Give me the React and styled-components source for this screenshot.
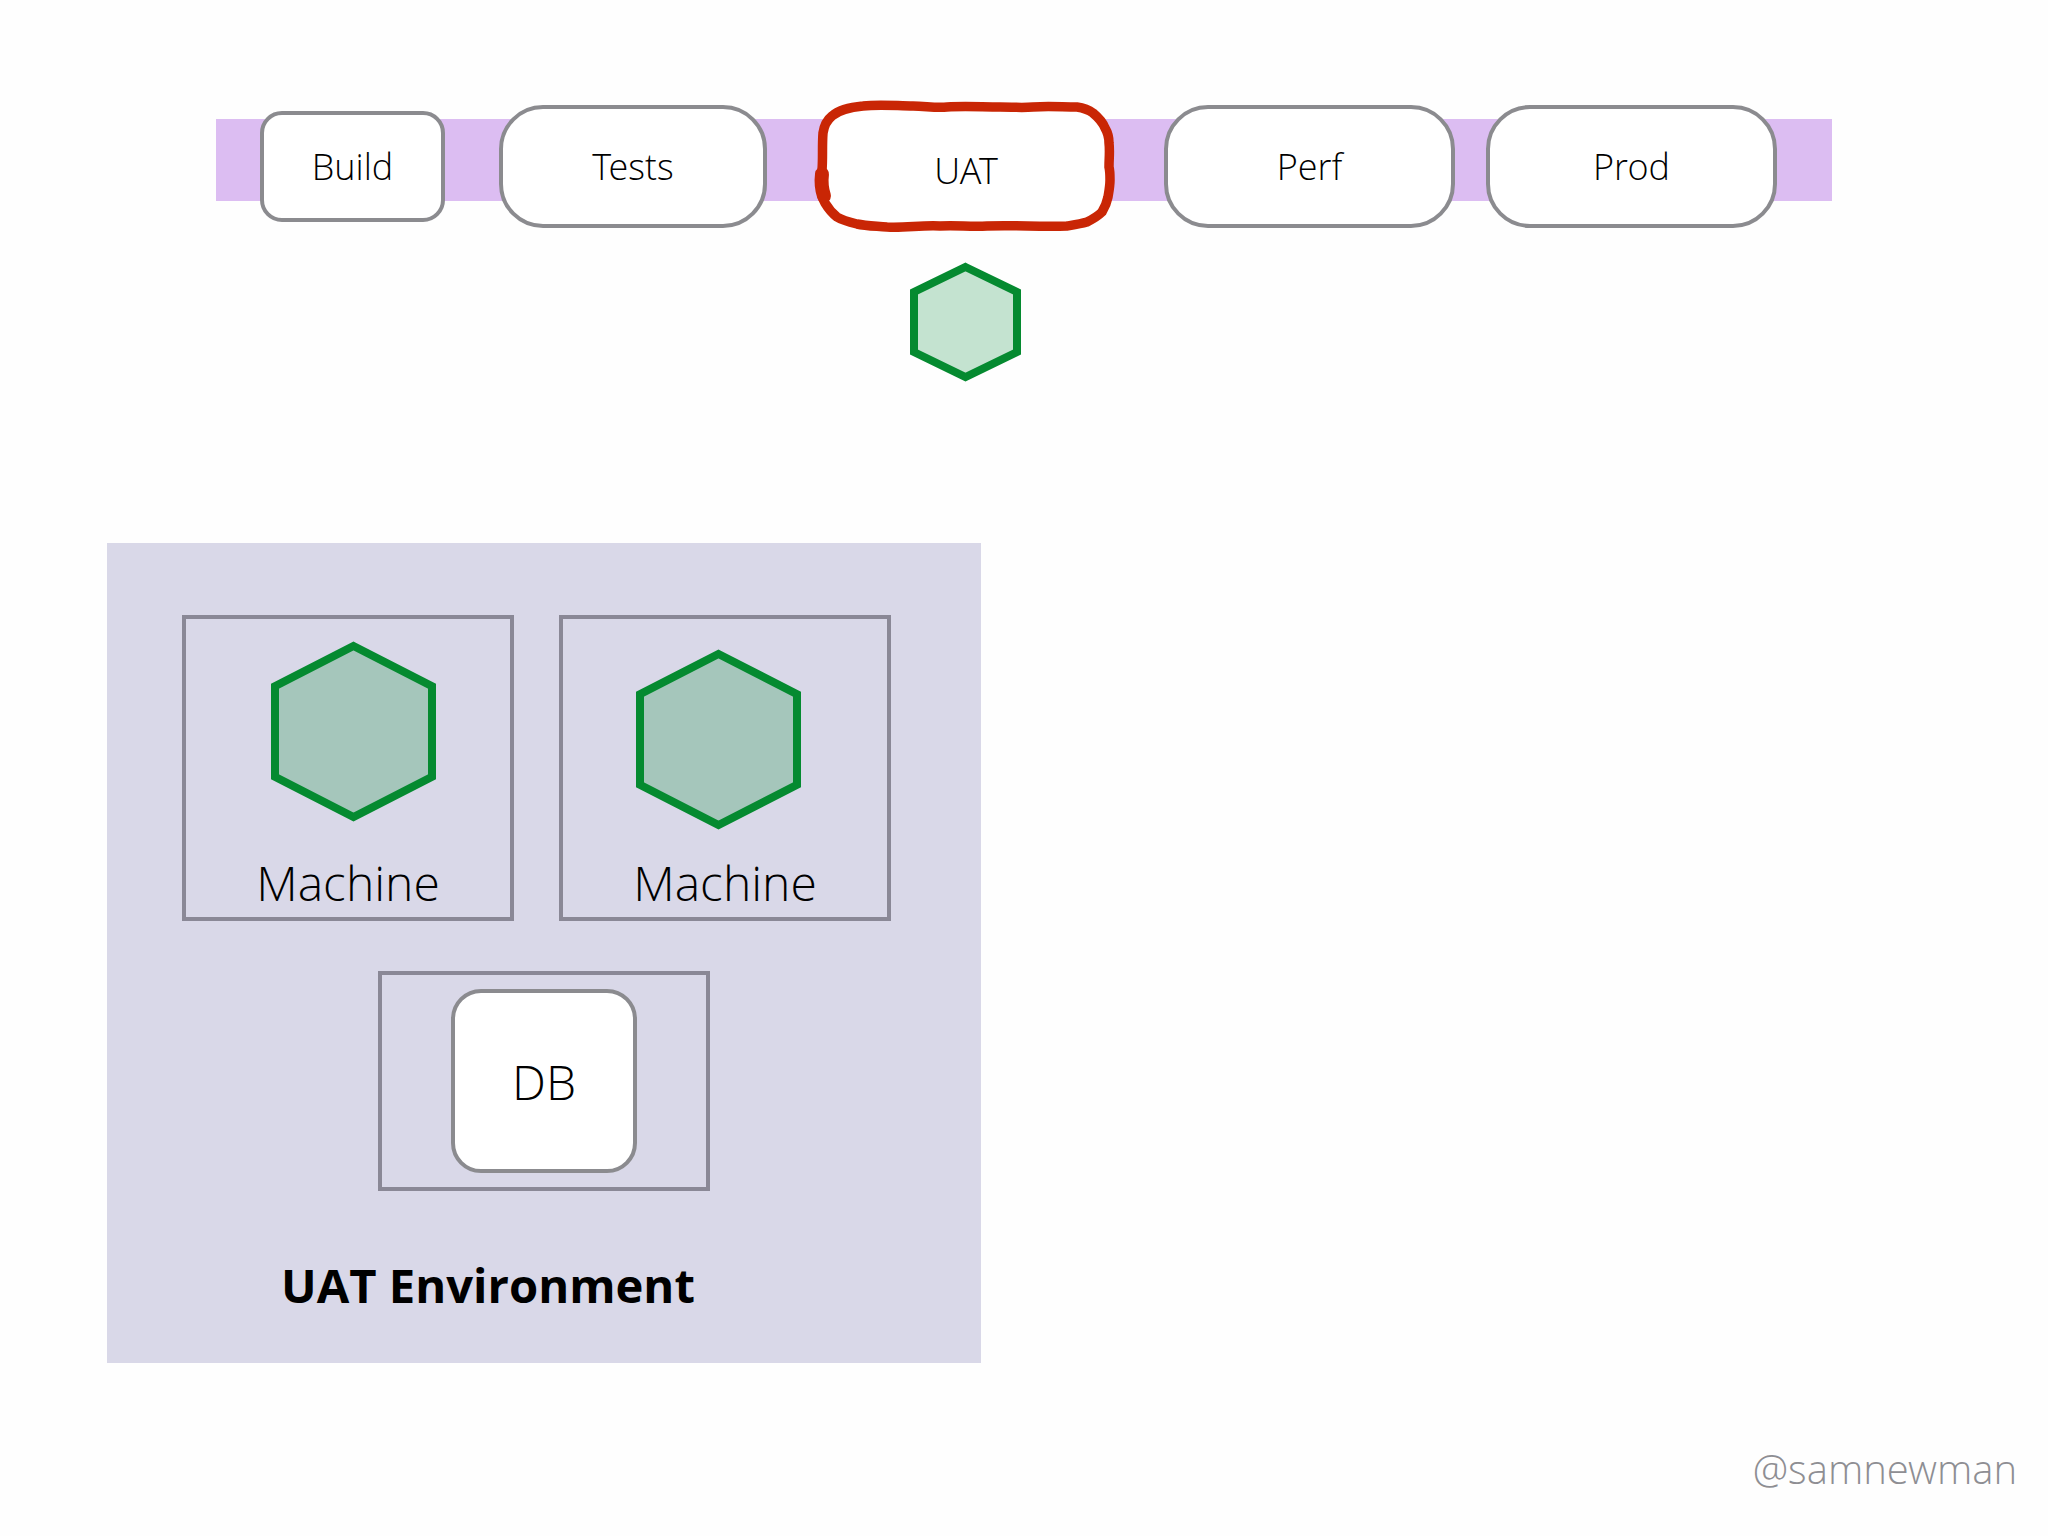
import React from 'react'
import styled, { createGlobalStyle } from 'styled-components'

const GlobalStyle = createGlobalStyle`
  html, body {
    margin: 0;
    padding: 0;
    background: #fefefe;
  }
  * {
    box-sizing: border-box;
  }
`

const stages = [
  { name: 'Build', width: 185, height: 111, radius: 22, gap: 54 },
  { name: 'Tests', width: 268, height: 123, radius: 44, gap: 53 },
  { name: 'UAT', width: 290, height: 123, radius: 44, gap: 54, active: true },
  { name: 'Perf', width: 291, height: 123, radius: 44, gap: 31 },
  { name: 'Prod', width: 291, height: 123, radius: 44, gap: 0 },
]

function Hexagon({ width, height, fill }) {
  const w = width
  const h = height
  const points = [
    [w / 2, 5],
    [w - 4, h * 0.25],
    [w - 4, h * 0.75],
    [w / 2, h - 5],
    [4, h * 0.75],
    [4, h * 0.25],
  ]
    .map((p) => p.join(','))
    .join(' ')
  return (
    <HexSvg width={w} height={h} viewBox={`0 0 ${w} ${h}`}>
      <polygon points={points} fill={fill} stroke="#058a30" strokeWidth="8" />
    </HexSvg>
  )
}

function App() {
  return (
    <Page>
      <GlobalStyle />
      <Pipeline>
        {stages.map((stage) => (
          <Stage
            key={stage.name}
            $width={stage.width}
            $height={stage.height}
            $radius={stage.radius}
            $gap={stage.gap}
            $active={stage.active}
          >
            {stage.name}
            {stage.active && (
              <Scribble width="310" height="140" viewBox="0 0 310 140">
                <path
                  d="M13 35C14 28 17 22 22 18 30 11 42 9 53 8 70 6 88 8 103 8 115 8 125 10 137 9 155 8 172 9 190 9 202 9 212 10 223 9 238 8 252 9 267 9 274 10 279 12 283 15 289 20 293 25 295 30 298 35 299 40 299 45 300 53 299 60 299 69 300 73 300 77 300 82 300 88 299 93 298 99 297 104 295 109 292 114 288 118 283 121 277 124 270 126 263 127 257 128 230 129 205 127 177 128 160 129 147 127 130 128 112 127 95 130 77 129 66 128 56 128 47 126 39 124 32 122 27 119 22 115 18 110 15 105 12 100 11 95 11 89 11 83 12 78 12 72 13 60 12 48 13 35Z"
                  fill="none"
                  stroke="#c92605"
                  strokeWidth="9.5"
                />
                <path d="M12 76C11 84 12 92 14 98" fill="none" stroke="#c92605" strokeWidth="14" strokeLinecap="round" />
              </Scribble>
            )}
          </Stage>
        ))}
      </Pipeline>

      <ArtifactSlot>
        <Hexagon width={111} height={120} fill="#c4e3d0" />
      </ArtifactSlot>

      <Environment>
        <MachineRow>
          <Machine $hexShift={5} $hexTop={26}>
            <Hexagon width={165} height={181} fill="#a5c6bb" />
            <MachineLabel>Machine</MachineLabel>
          </Machine>
          <Machine $hexShift={-7} $hexTop={34}>
            <Hexagon width={165} height={181} fill="#a5c6bb" />
            <MachineLabel>Machine</MachineLabel>
          </Machine>
        </MachineRow>
        <DbFrame>
          <DbCard>DB</DbCard>
        </DbFrame>
        <EnvironmentLabel>UAT Environment</EnvironmentLabel>
      </Environment>

      <Handle>@samnewman</Handle>
    </Page>
  )
}

export default App

const Page = styled.div`
  width: 2048px;
  height: 1536px;
  padding-top: 101px;
  overflow: hidden;
  background: #fefefe;
  font-family: "Open Sans Light", "Open Sans", "Noto Sans", sans-serif;
  font-weight: 300;
  color: #000;
  display: flex;
  flex-direction: column;
`

const Pipeline = styled.div`
  position: relative;
  flex: none;
  width: 1616px;
  height: 130px;
  margin-left: 216px;
  padding-left: 44px;
  display: flex;
  align-items: center;

  &::before {
    content: '';
    position: absolute;
    left: 0;
    right: 0;
    top: 18px;
    height: 82px;
    background: #dcbdf2;
  }
`

const Stage = styled.div`
  position: relative;
  flex: none;
  width: ${(p) => p.$width}px;
  height: ${(p) => p.$height}px;
  margin-right: ${(p) => p.$gap}px;
  border: ${(p) => (p.$active ? 'none' : '4px solid #8b8b8f')};
  border-radius: ${(p) => p.$radius}px;
  background: #fff;
  display: flex;
  align-items: center;
  justify-content: center;
  font-size: 36px;
  padding-top: ${(p) => (p.$active ? '8px' : '0')};
  padding-left: ${(p) => (p.$active ? '2px' : '0')};
`

const Scribble = styled.svg`
  position: absolute;
  left: -10px;
  top: -7px;
  pointer-events: none;
`

const HexSvg = styled.svg`
  display: block;
  flex: none;
`

const ArtifactSlot = styled.div`
  flex: none;
  margin-top: 31px;
  margin-left: 910px;
`

const Environment = styled.div`
  flex: none;
  width: 874px;
  height: 820px;
  margin-top: 161px;
  margin-left: 107px;
  padding-top: 72px;
  background: #d9d8e8;
  display: flex;
  flex-direction: column;
`

const MachineRow = styled.div`
  display: flex;
  gap: 45px;
  padding-left: 75px;
`

const Machine = styled.div`
  width: 332px;
  height: 306px;
  border: 4px solid #8a8896;
  display: flex;
  flex-direction: column;
  align-items: center;
  padding-top: ${(p) => p.$hexTop - 4}px;

  ${HexSvg} {
    transform: translateX(${(p) => p.$hexShift}px);
  }
`

const MachineLabel = styled.div`
  margin-top: auto;
  margin-bottom: 3px;
  font-size: 48px;
  line-height: 62px;
`

const DbFrame = styled.div`
  align-self: center;
  width: 332px;
  height: 220px;
  margin-top: 50px;
  border: 4px solid #8a8896;
  display: flex;
  align-items: center;
  justify-content: center;
`

const DbCard = styled.div`
  width: 186px;
  height: 184px;
  border: 4px solid #8b8b8f;
  border-radius: 30px;
  background: #fff;
  display: flex;
  align-items: center;
  justify-content: center;
  font-size: 48px;
`

const EnvironmentLabel = styled.div`
  margin-top: 63px;
  margin-left: 174px;
  font-family: "Open Sans", "Noto Sans", sans-serif;
  font-size: 47.2px;
  line-height: 62px;
  font-weight: 700;
`

const Handle = styled.div`
  margin-top: 79px;
  padding-right: 31px;
  text-align: right;
  font-size: 40px;
  line-height: 54px;
  color: #8e8e93;
`
